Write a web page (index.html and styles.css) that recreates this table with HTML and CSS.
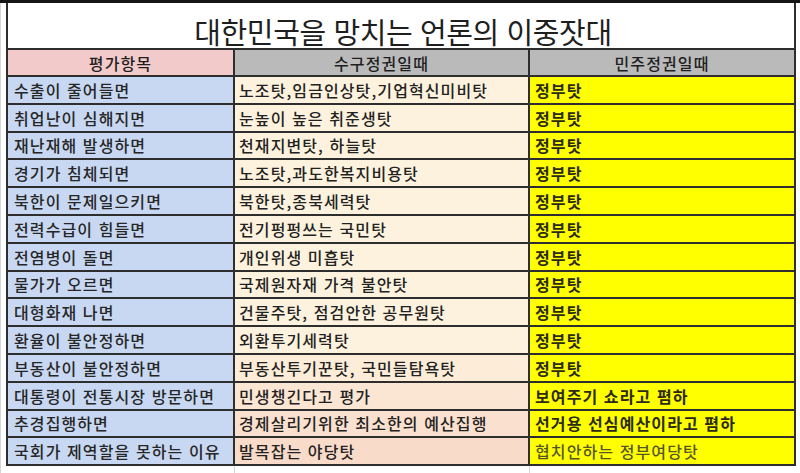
FILE: index.html
```html
<!DOCTYPE html>
<html lang="ko">
<head>
<meta charset="utf-8">
<title>대한민국을 망치는 언론의 이중잣대</title>
<link rel="stylesheet" href="styles.css">
</head>
<body>
<div class="sheet">
  <div class="grid">
    <div class="cell title">대한민국을 망치는 언론의 이중잣대</div>

    <div class="cell head h1">평가항목</div>
    <div class="cell head h2">수구정권일때</div>
    <div class="cell head h3">민주정권일때</div>

    <div class="cell c1">수출이 줄어들면</div><div class="cell c2">노조탓,임금인상탓,기업혁신미비탓</div><div class="cell c3">정부탓</div>
    <div class="cell c1">취업난이 심해지면</div><div class="cell c2">눈높이 높은 취준생탓</div><div class="cell c3">정부탓</div>
    <div class="cell c1">재난재해 발생하면</div><div class="cell c2">천재지변탓, 하늘탓</div><div class="cell c3">정부탓</div>
    <div class="cell c1">경기가 침체되면</div><div class="cell c2">노조탓,과도한복지비용탓</div><div class="cell c3">정부탓</div>
    <div class="cell c1">북한이 문제일으키면</div><div class="cell c2">북한탓,종북세력탓</div><div class="cell c3">정부탓</div>
    <div class="cell c1">전력수급이 힘들면</div><div class="cell c2">전기펑펑쓰는 국민탓</div><div class="cell c3">정부탓</div>
    <div class="cell c1">전염병이 돌면</div><div class="cell c2">개인위생 미흡탓</div><div class="cell c3">정부탓</div>
    <div class="cell c1">물가가 오르면</div><div class="cell c2">국제원자재 가격 불안탓</div><div class="cell c3">정부탓</div>
    <div class="cell c1">대형화재 나면</div><div class="cell c2">건물주탓, 점검안한 공무원탓</div><div class="cell c3">정부탓</div>
    <div class="cell c1">환율이 불안정하면</div><div class="cell c2">외환투기세력탓</div><div class="cell c3">정부탓</div>
    <div class="cell c1">부동산이 불안정하면</div><div class="cell c2 peach1">부동산투기꾼탓, 국민들탐욕탓</div><div class="cell c3">정부탓</div>
    <div class="cell c1">대통령이 전통시장 방문하면</div><div class="cell c2 peach2">민생챙긴다고 평가</div><div class="cell c3">보여주기 쇼라고 폄하</div>
    <div class="cell c1">추경집행하면</div><div class="cell c2 peach3">경제살리기위한 최소한의 예산집행</div><div class="cell c3">선거용 선심예산이라고 폄하</div>
    <div class="cell c1">국회가 제역할을 못하는 이유</div><div class="cell c2 peach4">발목잡는 야당탓</div><div class="cell c3 faded">협치안하는 정부여당탓</div>

    <div class="cell below"></div><div class="cell below"></div><div class="cell below"></div>
  </div>
</div>
</body>
</html>
```
FILE: styles.css
```css
* { box-sizing: border-box; }

html, body {
  margin: 0;
  padding: 0;
  background: #ffffff;
}

body {
  width: 800px;
  height: 473px;
  overflow: hidden;
  font-family: "Noto Sans CJK KR", "Noto Sans", sans-serif;
  color: #222222;
}

.sheet {
  border-top: 3px solid #161616;
  padding-left: 6px;
  background:
    linear-gradient(to right, #d6d6d6 0, #d6d6d6 1px, transparent 1px) no-repeat;
  height: 473px;
}

.grid {
  display: grid;
  grid-template-columns: 229px 295px 266px;
  grid-template-rows: 47px 27px repeat(14, 27.8px) 10px;
}

.cell {
  border-right: 2px solid #2e2e2e;
  border-bottom: 2px solid #2e2e2e;
  display: flex;
  align-items: center;
  font-size: 16px;
  font-weight: 500;
  letter-spacing: 1.1px;
  line-height: 1;
  white-space: nowrap;
  overflow: hidden;
}

.cell:nth-child(3n+2) { border-left: 2px solid #2e2e2e; }
.title { border-left: 2px solid #2e2e2e; }

.title {
  grid-column: 1 / 4;
  justify-content: center;
  font-size: 29px;
  font-weight: 400;
  letter-spacing: -0.4px;
  padding-top: 11px;
  padding-left: 4px;
  color: #1e1e1e;
  background: #ffffff;
}

.head {
  justify-content: center;
  padding-top: 1px;
  color: #1f1f1f;
}
.h1 { background: #f3caca; }
.h2, .h3 { background: #bababa; }

.c1 {
  background: #c8d8f2;
  padding-left: 6px;
  color: #262626;
}
.c2 {
  background: #fdf2dd;
  padding-left: 4px;
}
.c2.peach1 { background: #fcecd8; }
.c2.peach2 { background: #fbe6d4; }
.c2.peach3 { background: #fae0cf; }
.c2.peach4 { background: #f9dbc9; }

.c3 {
  background: #ffff00;
  padding-left: 5px;
  font-weight: 700;
  letter-spacing: 1.1px;
  color: #2b2b14;
}
.c3.faded {
  font-weight: 500;
  color: #55552a;
}

.below {
  background: transparent;
  border-bottom: none;
  border-left: none;
  border-right: 1px solid #d8d8d8;
}
.below:nth-child(3n+2) { border-left: none; }
.below:last-child { border-right: none; }
```
